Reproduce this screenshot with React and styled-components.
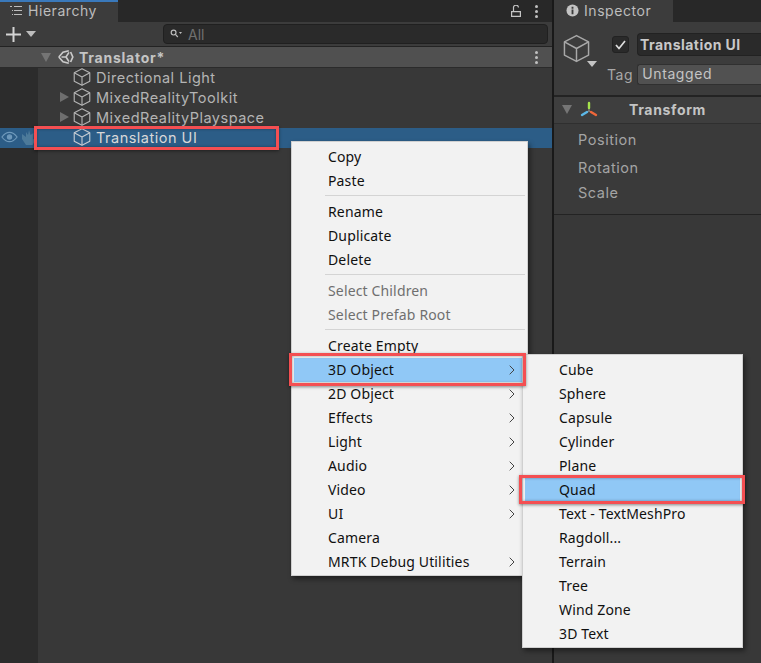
import React from "react";
import styled, { createGlobalStyle } from "styled-components";

const GlobalStyle = createGlobalStyle`
	html, body {
		margin: 0;
		padding: 0;
		width: 761px;
		height: 663px;
		overflow: hidden;
		background: #383838;
	}
	* { box-sizing: border-box; }
`;

const Page = styled.div`
	position: relative;
	display: grid;
	grid-template-columns: 552px 2px 207px;
	width: 761px;
	height: 663px;
	font-family: Inter, "Noto Sans", sans-serif;
	font-size: 14px;
	color: #c4c4c4;
	background: #383838;
	overflow: hidden;
`;

const Panel = styled.div`
	display: flex;
	flex-direction: column;
	min-width: 0;
	height: 663px;
`;

const Divider = styled.div`
	background: #191919;
`;

const TabBar = styled.div`
	display: flex;
	align-items: center;
	height: 22px;
	background: #282828;
`;

const Tab = styled.div`
	display: flex;
	align-items: center;
	gap: 5px;
	align-self: stretch;
	width: ${(p) => p.$width}px;
	padding-left: ${(p) => p.$pad}px;
	padding-bottom: ${(p) => (p.$active ? "3px" : "1px")};
	background: #3c3c3c;
	border-top: ${(p) => (p.$active ? "2px solid #3a79bb" : "0")};
	color: #bdbdbd;
	font-size: 14px;
	letter-spacing: 0.55px;
`;

const TabActions = styled.div`
	display: flex;
	align-items: center;
	gap: 14px;
	margin-left: auto;
	margin-right: 14px;
`;

const Toolbar = styled.div`
	display: flex;
	align-items: center;
	height: 25px;
	padding: 0 4px 0 5px;
	background: #3c3c3c;
	border-bottom: 1px solid #232323;
`;

const ToolCaret = styled.svg`
	margin-left: 4px;
`;

const SearchBox = styled.div`
	display: flex;
	align-items: center;
	gap: 6px;
	width: 385px;
	height: 20px;
	margin-left: auto;
	padding-left: 6px;
	border: 1px solid #202020;
	border-radius: 4px;
	background: #2a2a2a;
	color: #707070;
	font-size: 14px;
`;

const SceneHeader = styled.div`
	display: flex;
	align-items: center;
	height: 21px;
	padding-left: 41px;
	background: #505050;
	border-bottom: 1px solid #2b2b2b;
	font-weight: 700;
	color: #c4c4c4;
	font-size: 14px;
	letter-spacing: 0.75px;
`;

const TreeBody = styled.div`
	flex: 1;
	display: flex;
	flex-direction: column;
	background: linear-gradient(to right, #2c2c2c 38px, #383838 38px);
`;

const Row = styled.div`
	position: relative;
	display: flex;
	align-items: center;
	height: 20px;
	padding-left: ${(p) => (p.$selected ? "0" : "60px")};
	padding-bottom: 2px;
	background: ${(p) => (p.$selected ? "#2c5d87" : "transparent")};
	color: ${(p) => (p.$selected ? "#d8d8d8" : "#b4b4b4")};
	font-size: 14.5px;
	letter-spacing: 0.5px;
`;

const Gutter = styled.div`
	display: flex;
	align-items: center;
	gap: 3px;
	width: 60px;
	padding-left: 1px;
	opacity: 0.8;
`;

const Fold = styled.span`
	flex: none;
	width: 0;
	height: 0;
	margin-right: ${(p) => p.$gap}px;
	border-style: solid;
	border-color: transparent;
	border-width: ${(p) =>
		p.$right ? "5px 0 5px 9px" : "9px 5px 0 5px"};
	border-left-color: ${(p) => (p.$right ? "#6e6e6e" : "transparent")};
	border-top-color: ${(p) => (p.$right ? "transparent" : "#757575")};
`;

const Spacer = styled.span`
	width: 12px;
`;

const Label = styled.span`
	margin-left: 4px;
	white-space: nowrap;
`;

const Dots = styled.div`
	display: flex;
	flex-direction: column;
	gap: 2px;
	margin-left: ${(p) => (p.$push ? "auto" : "0")};
	margin-right: ${(p) => p.$right}px;

	i {
		display: block;
		width: 3px;
		height: 3px;
		border-radius: 50%;
		background: #c0c0c0;
	}
`;

const Callout = styled.div`
	position: absolute;
	top: ${(p) => p.$top}px;
	bottom: ${(p) => p.$bottom}px;
	left: ${(p) => p.$left}px;
	right: ${(p) => p.$right}px;
	border: 3px solid #f44f52;
	box-shadow: 0 1px 3px rgba(0, 0, 0, 0.45), inset 0 0 3px rgba(0, 0, 0, 0.35);
	pointer-events: none;
	z-index: 3;
`;

const InspectorHead = styled.div`
	display: grid;
	grid-template-columns: 51px 1fr;
	height: 75px;
	padding: 11px 0 0 7px;
	background: #3c3c3c;
	border-bottom: 2px solid #232323;
`;

const BigIcon = styled.div`
	position: relative;
`;

const IconCaret = styled.svg`
	position: absolute;
	left: 26px;
	top: 28px;
`;

const NameColumn = styled.div`
	display: flex;
	flex-direction: column;
	gap: 8px;
`;

const NameRow = styled.div`
	display: flex;
	align-items: center;
	gap: 8px;
`;

const Check = styled.div`
	display: flex;
	align-items: center;
	justify-content: center;
	flex: none;
	width: 17px;
	height: 17px;
	border: 1px solid #222;
	border-radius: 3px;
	background: #2a2a2a;
`;

const NameField = styled.div`
	flex: 1;
	height: 23px;
	padding-left: 2px;
	line-height: 22px;
	border: 1px solid #222;
	border-right: 0;
	border-radius: 4px 0 0 4px;
	background: #2a2a2a;
	color: #c8c8c8;
	font-weight: 700;
	letter-spacing: 0.45px;
	white-space: nowrap;
`;

const TagRow = styled.div`
	display: flex;
	align-items: center;
	gap: 4px;
	margin-left: -5px;
	letter-spacing: 0.6px;
	color: #a8a8a8;
`;

const TagSelect = styled.div`
	flex: 1;
	height: 21px;
	padding-left: 4px;
	line-height: 18px;
	border: 1px solid #303030;
	border-right: 0;
	border-radius: 3px 0 0 3px;
	background: #515151;
	color: #c4c4c4;
	white-space: nowrap;
`;

const ComponentHead = styled.div`
	display: flex;
	align-items: center;
	height: 27px;
	padding: 0 0 1px 8px;
	background: #3e3e3e;
	border-bottom: 1px solid #2f2f2f;
	font-weight: 700;
	color: #c4c4c4;
	letter-spacing: 0.65px;
`;

const ComponentTitle = styled.span`
	margin-left: 31px;
`;

const Fields = styled.div`
	display: flex;
	flex-direction: column;
	height: 91px;
	padding: 5px 0 0 24px;
	background: #3a3a3a;
	border-bottom: 1px solid #232323;
`;

const FieldLabel = styled.div`
	height: ${(p) => p.$h}px;
	line-height: 22px;
	color: #a4a4a4;
	font-size: 14.5px;
	letter-spacing: 0.55px;
`;

const Menu = styled.div`
	position: absolute;
	left: ${(p) => p.$left}px;
	top: ${(p) => p.$top}px;
	width: ${(p) => p.$width}px;
	padding: 3px 2px 1px;
	border: 1px solid #d0d0d0;
	background: #f2f2f2;
	box-shadow: 2px 3px 5px rgba(0, 0, 0, 0.45);
	font-family: "Noto Sans", sans-serif;
	font-size: 14px;
	letter-spacing: 0.15px;
	color: #101010;
`;

const Item = styled.div`
	position: relative;
	display: flex;
	align-items: center;
	height: 24px;
	padding: 0 0 2px 34px;
	background: ${(p) => (p.$active ? "#90c8f6" : "transparent")};
	color: ${(p) => (p.$disabled ? "#6f6f6f" : "#101010")};
	white-space: nowrap;
`;

const Chevron = styled.svg`
	position: absolute;
	right: 10px;
	top: 7px;
`;

const Separator = styled.div`
	height: 1px;
	margin: 2px 0 4px 31px;
	background: #d4d4d4;
`;

const CubeIcon = ({ size = 20, color = "#b4b4b4", weight = 1 }) => (
	<svg width={size} height={size} viewBox="0 0 18 18" fill="none" stroke={color} strokeWidth={weight} strokeLinejoin="round">
		<path d="M9 1.500 16 5.200v7.600L9 16.500 2 12.800V5.200z" />
		<path d="M2 5.200 9 9l7-3.800M9 9v7.500" />
	</svg>
);

const UnityMark = styled.svg`
	flex: none;
	margin-right: 1px;
`;

const UnityIcon = () => (
	<UnityMark width="16" height="16" viewBox="0 0 16 16" fill="none" stroke="#cacaca" strokeWidth="1.700">
		<path d="M.8 8 5 3.300 10.800 1.800M12.600 3 14.800 8l-2.200 5M10.800 14.200 5 12.700.8 8" />
		<path d="M3.500 8H8l3-4.600M8 8l3 4.600" />
	</UnityMark>
);

const ChevronIcon = () => (
	<Chevron width="6" height="10" viewBox="0 0 6 10" fill="none" stroke="#444" strokeWidth="1">
		<path d="M.7.7 5 5 .7 9.300" />
	</Chevron>
);

const DotsIcon = ({ right, push }) => (
	<Dots $right={right} $push={push}>
		<i />
		<i />
		<i />
	</Dots>
);

const contextGroups = [
	[{ label: "Copy" }, { label: "Paste" }],
	[{ label: "Rename" }, { label: "Duplicate" }, { label: "Delete" }],
	[
		{ label: "Select Children", disabled: true },
		{ label: "Select Prefab Root", disabled: true },
	],
	[
		{ label: "Create Empty" },
		{ label: "3D Object", sub: true, active: true },
		{ label: "2D Object", sub: true },
		{ label: "Effects", sub: true },
		{ label: "Light", sub: true },
		{ label: "Audio", sub: true },
		{ label: "Video", sub: true },
		{ label: "UI", sub: true },
		{ label: "Camera" },
		{ label: "MRTK Debug Utilities", sub: true },
	],
];

const objectItems = [
	"Cube",
	"Sphere",
	"Capsule",
	"Cylinder",
	"Plane",
	"Quad",
	"Text - TextMeshPro",
	"Ragdoll...",
	"Terrain",
	"Tree",
	"Wind Zone",
	"3D Text",
];

export default function App() {
	return (
		<Page>
			<GlobalStyle />
			<Panel>
				<TabBar>
					<Tab $width={118} $pad={9} $active>
						<svg width="14" height="12" viewBox="0 0 14 12" fill="none" stroke="#bdbdbd" strokeWidth="1">
							<path d="M1 1.500h2M5 1.500h8M3 5.500h1M5 5.500h8M3 9.500h1M5 9.500h8" />
						</svg>
						Hierarchy
					</Tab>
					<TabActions>
						<svg width="10" height="12" viewBox="0 0 10 12" fill="none" stroke="#c4c4c4" strokeWidth="1.200">
							<path d="M.6 6.600h8.800v4.800H.6zM2.500 6.600V3a2.500 2.500 0 0 1 5-.5" />
						</svg>
						<DotsIcon right={0} />
					</TabActions>
				</TabBar>
				<Toolbar>
					<svg width="17" height="17" viewBox="0 0 17 17" stroke="#d4d4d4" strokeWidth="2">
						<path d="M8.500 1v15M1 8.500h15" />
					</svg>
					<ToolCaret width="10" height="6" viewBox="0 0 10 6">
						<path d="M0 0h10L5 6z" fill="#bdbdbd" />
					</ToolCaret>
					<SearchBox>
						<svg width="12" height="10" viewBox="0 0 12 10" fill="none" stroke="#bdbdbd" strokeWidth="1.200">
							<circle cx="3.600" cy="3.600" r="2.400" />
							<path d="m5.400 5.400 2.400 2.600" />
							<path d="M9 3h3l-1.500 2z" fill="#bdbdbd" stroke="none" />
						</svg>
						All
					</SearchBox>
				</Toolbar>
				<SceneHeader>
					<Fold $gap={7} />
					<UnityIcon />
					<Label>Translator*</Label>
					<DotsIcon right={14} push />
				</SceneHeader>
				<TreeBody>
					<Row>
						<Spacer />
						<CubeIcon />
						<Label>Directional Light</Label>
					</Row>
					<Row>
						<Fold $right $gap={3} />
						<CubeIcon />
						<Label>MixedRealityToolkit</Label>
					</Row>
					<Row>
						<Fold $right $gap={3} />
						<CubeIcon />
						<Label>MixedRealityPlayspace</Label>
					</Row>
					<Row $selected>
						<Gutter>
							<svg width="17" height="12" viewBox="0 0 18 12" fill="none" stroke="#7fa8c8" strokeWidth="1.300">
								<path d="M1 6c2.500-3.500 5-5 8-5s5.500 1.500 8 5c-2.500 3.500-5 5-8 5S3.500 9.500 1 6z" />
								<circle cx="9" cy="6" r="2.200" fill="#7fa8c8" />
							</svg>
							<svg width="15" height="15" viewBox="0 0 15 15" fill="#55829f">
								<path d="M1 4 5 7V2l2 3 1-5 1.500 5 3-2-.5 6 2.500 1-3 5H5L1 9z" />
							</svg>
						</Gutter>
						<Spacer />
						<CubeIcon color="#c4ccd4" />
						<Label>Translation UI</Label>
						<Callout $top={-2} $bottom={-2} $left={34} $right={273} />
					</Row>
				</TreeBody>
			</Panel>
			<Divider />
			<Panel>
				<TabBar>
					<Tab $width={119} $pad={12}>
						<svg width="13" height="13" viewBox="0 0 14 14">
							<circle cx="7" cy="7" r="6.500" fill="#c4c4c4" />
							<path d="M6 6h2v5H6zM6 3h2v2H6z" fill="#3c3c3c" />
						</svg>
						Inspector
					</Tab>
				</TabBar>
				<InspectorHead>
					<BigIcon>
						<CubeIcon size={31} color="#a8a8a8" weight={0.85} />
						<IconCaret width="10" height="6" viewBox="0 0 10 6">
							<path d="M0 0h10L5 6z" fill="#c4c4c4" />
						</IconCaret>
					</BigIcon>
					<NameColumn>
						<NameRow>
							<Check>
								<svg width="11" height="10" viewBox="0 0 11 10" fill="none" stroke="#dedede" strokeWidth="1.700">
									<path d="m1 5 3 3.500L10 1" />
								</svg>
							</Check>
							<NameField>Translation UI</NameField>
						</NameRow>
						<TagRow>
							Tag
							<TagSelect>Untagged</TagSelect>
						</TagRow>
					</NameColumn>
				</InspectorHead>
				<ComponentHead>
					<Fold $gap={8} />
					<svg width="18" height="18" viewBox="0 0 18 18" fill="none" strokeWidth="2.400" strokeLinecap="round">
						<path d="M9 8v2M9 10l-2 1M9 10l2 1" stroke="#8a8a8a" strokeWidth="1" />
						<path d="M9 2v5" stroke="#a6e34c" />
						<path d="M7 11l-5 3" stroke="#5cb8e8" />
						<path d="M11 11l5 3" stroke="#f0673a" />
					</svg>
					<ComponentTitle>Transform</ComponentTitle>
				</ComponentHead>
				<Fields>
					<FieldLabel $h={28}>Position</FieldLabel>
					<FieldLabel $h={25}>Rotation</FieldLabel>
					<FieldLabel $h={22}>Scale</FieldLabel>
				</Fields>
			</Panel>

			<Menu $left={291} $top={141} $width={237}>
				{contextGroups.map((group, i) => (
					<React.Fragment key={i}>
						{i > 0 && <Separator />}
						{group.map((item) => (
							<Item key={item.label} $active={item.active} $disabled={item.disabled}>
								{item.label}
								{item.sub && <ChevronIcon />}
								{item.active && <Callout $top={-5} $bottom={-4} $left={-5} $right={-1} />}
							</Item>
						))}
					</React.Fragment>
				))}
			</Menu>
			<Menu $left={522} $top={354} $width={221}>
				{objectItems.map((label) => (
					<Item key={label} $active={label === "Quad"}>
						{label}
						{label === "Quad" && <Callout $top={-3} $bottom={-2} $left={-6} $right={-5} />}
					</Item>
				))}
			</Menu>
		</Page>
	);
}
